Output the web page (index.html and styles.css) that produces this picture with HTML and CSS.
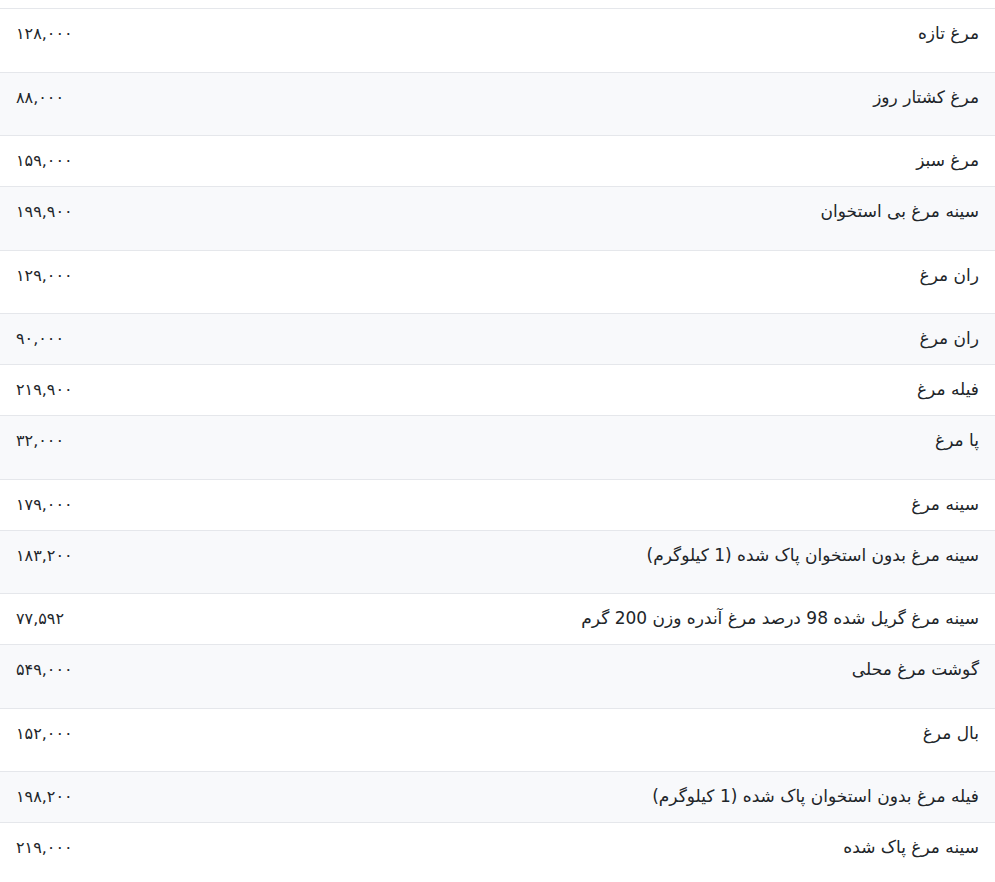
FILE: index.html
```html
<!DOCTYPE html>
<html lang="fa" dir="rtl">
<head>
<meta charset="utf-8">
<link rel="stylesheet" href="styles.css">
</head>
<body>
<table class="prices">
<tbody>
<tr class="tall"><td class="name">مرغ تازه</td><td class="price">۱۲۸,۰۰۰</td></tr>
<tr class="tall alt"><td class="name">مرغ کشتار روز</td><td class="price">۸۸,۰۰۰</td></tr>
<tr><td class="name">مرغ سبز</td><td class="price">۱۵۹,۰۰۰</td></tr>
<tr class="tall alt"><td class="name">سینه مرغ بی استخوان</td><td class="price">۱۹۹,۹۰۰</td></tr>
<tr class="tall"><td class="name">ران مرغ</td><td class="price">۱۲۹,۰۰۰</td></tr>
<tr class="alt"><td class="name">ران مرغ</td><td class="price">۹۰,۰۰۰</td></tr>
<tr><td class="name">فیله مرغ</td><td class="price">۲۱۹,۹۰۰</td></tr>
<tr class="tall alt"><td class="name">پا مرغ</td><td class="price">۳۲,۰۰۰</td></tr>
<tr><td class="name">سینه مرغ</td><td class="price">۱۷۹,۰۰۰</td></tr>
<tr class="tall alt"><td class="name">سینه مرغ بدون استخوان پاک شده (1 کیلوگرم)</td><td class="price">۱۸۳,۲۰۰</td></tr>
<tr><td class="name">سینه مرغ گریل شده 98 درصد مرغ آندره وزن 200 گرم</td><td class="price">۷۷,۵۹۲</td></tr>
<tr class="tall alt"><td class="name">گوشت مرغ محلی</td><td class="price">۵۴۹,۰۰۰</td></tr>
<tr class="tall"><td class="name">بال مرغ</td><td class="price">۱۵۲,۰۰۰</td></tr>
<tr class="alt"><td class="name">فیله مرغ بدون استخوان پاک شده (1 کیلوگرم)</td><td class="price">۱۹۸,۲۰۰</td></tr>
<tr class="tall"><td class="name">سینه مرغ پاک شده</td><td class="price">۲۱۹,۰۰۰</td></tr>
</tbody>
</table>
</body>
</html>
```

FILE: styles.css
```css
html, body {
  margin: 0;
  padding: 0;
  background: #ffffff;
}
body {
  padding-top: 8px;
  font-family: "DejaVu Sans", "Noto Sans", sans-serif;
  font-size: 17px;
  color: #212529;
}
.prices {
  width: 100%;
  border-collapse: collapse;
  border-top: 1px solid #e5e7eb;
}
.prices td {
  padding: 12px 16px 13px 16px;
  line-height: 25px;
  vertical-align: top;
  border-bottom: 1px solid #e5e7eb;
}
.prices tr.tall td {
  padding-bottom: 25.5px;
}
.prices tr.alt td {
  background: #f8f9fb;
}
.name {
  text-align: right;
}
.price {
  text-align: left;
  white-space: nowrap;
  width: 1%;
  font-size: 16px;
}
```
